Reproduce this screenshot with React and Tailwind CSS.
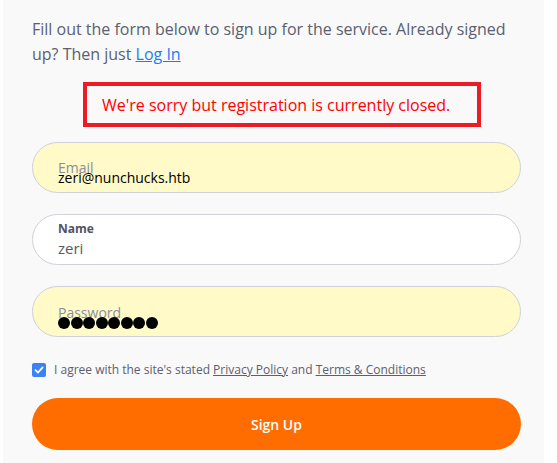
export default function App() {
  const font = { fontFamily: '"Open Sans", "Noto Sans", sans-serif' };
  return (
    <div className="w-[557px] h-[463px] bg-white overflow-hidden" style={font}>
      <div className="ml-[3px] w-[541px] h-[463px] bg-[#f9f9f9] px-[29px] pt-[17px]">
        <p className="text-[16px] leading-[25px] text-[#5b6070]">
          Fill out the form below to sign up for the service. Already signed up? Then just{" "}
          <a href="#" className="text-[#1e7ef0] underline">Log In</a>
        </p>
        <div className="mt-[15px] ml-[51px] w-[398px] h-[45px] border-4 border-[#ed1c24] flex items-center pl-[15px]">
          <span className="text-[16px] text-[#ff0000] leading-none">We're sorry but registration is currently closed.</span>
        </div>

        <div className="mt-[15px] h-[51px] w-[489px] rounded-full border border-[#cfd0d8] bg-[#fffac8] pl-[25px] pt-[18px]">
          <div className="text-[14px] leading-[14px] text-[#8a8e9a]">Email</div>
          <div className="mt-[-5px] text-[14px] leading-[15px] text-black">zeri@nunchucks.htb</div>
        </div>

        <div className="mt-[21px] h-[51px] w-[489px] rounded-full border border-[#cfd0d8] bg-white pl-[25px] pt-[8px]">
          <div className="text-[12px] leading-[12px] font-bold text-[#4f5366]">Name</div>
          <div className="mt-[6px] text-[15px] leading-[15px] text-[#555a66]">zeri</div>
        </div>

        <div className="mt-[21px] h-[51px] w-[489px] rounded-full border border-[#cfd0d8] bg-[#fffac8] pl-[25px] pt-[19px]">
          <div className="text-[14px] leading-[14px] text-[#8a8e9a]">Password</div>
          <div className="mt-[-3px] flex gap-[0.5px]">
            {Array.from({ length: 8 }).map((_, i) => (
              <span key={i} className="block w-[12px] h-[12px] rounded-full bg-black" />
            ))}
          </div>
        </div>

        <div className="mt-[26px] flex items-center gap-[8px]">
          <span className="w-[14px] h-[14px] rounded-[2px] bg-[#3b82f6] flex items-center justify-center">
            <svg width="10" height="10" viewBox="0 0 10 10" fill="none">
              <path d="M1.5 5.2 L4 7.6 L8.6 2.4" stroke="white" strokeWidth="1.8" strokeLinecap="round" strokeLinejoin="round" />
            </svg>
          </span>
          <span className="text-[12px] leading-[14px] text-[#5b6070]">
            I agree with the site's stated <a href="#" className="underline">Privacy Policy</a> and{" "}
            <a href="#" className="underline">Terms &amp; Conditions</a>
          </span>
        </div>

        <button className="mt-[21px] h-[52px] w-[489px] rounded-full bg-[#ff6d00] text-white text-[14px] font-semibold flex items-center justify-center">
          Sign Up
        </button>
      </div>
    </div>
  );
}
